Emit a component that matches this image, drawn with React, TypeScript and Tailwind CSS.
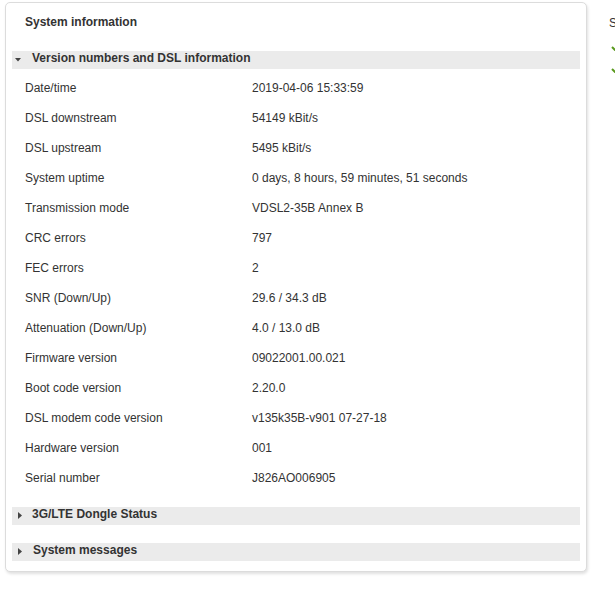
import React from "react";

const rows: [string, string][] = [
  ["Date/time", "2019-04-06 15:33:59"],
  ["DSL downstream", "54149 kBit/s"],
  ["DSL upstream", "5495 kBit/s"],
  ["System uptime", "0 days, 8 hours, 59 minutes, 51 seconds"],
  ["Transmission mode", "VDSL2-35B Annex B"],
  ["CRC errors", "797"],
  ["FEC errors", "2"],
  ["SNR (Down/Up)", "29.6 / 34.3 dB"],
  ["Attenuation (Down/Up)", "4.0 / 13.0 dB"],
  ["Firmware version", "09022001.00.021"],
  ["Boot code version", "2.20.0"],
  ["DSL modem code version", "v135k35B-v901 07-27-18"],
  ["Hardware version", "001"],
  ["Serial number", "J826AO006905"],
];

function DownTri() {
  return (
    <svg width="6" height="4" viewBox="0 0 6 4" className="ml-[3px] mr-[11px] mt-[3px]">
      <polygon points="0,0 6,0 3,3.5" fill="#444" />
    </svg>
  );
}

function RightTri() {
  return (
    <svg width="4" height="7" viewBox="0 0 4 7" className="ml-[6px] mr-[10px] mt-[2px]">
      <polygon points="0,0 4,3.5 0,7" fill="#444" />
    </svg>
  );
}

function Check() {
  return (
    <svg width="10" height="8" viewBox="0 0 10 8">
      <path d="M1 4 L4 7 L9 1" stroke="#5a9a1e" strokeWidth="2" fill="none" />
    </svg>
  );
}

export default function App() {
  return (
    <div className="flex w-[615px] h-[590px] overflow-hidden bg-white font-['Liberation_Sans',Arial,sans-serif] text-[12px] text-[#333]">
      <div className="pl-[5px] pt-[2px] shrink-0">
        <div className="w-[582px] border border-[#dcdcdc] rounded-[5px] shadow-[1px_2px_3px_rgba(0,0,0,0.12)] bg-white px-[6px] pb-[10px]">
          <div className="h-[48px] pl-[13px] pt-[12px] leading-[14px] font-bold text-[#333]">
            System information
          </div>
          <div className="h-[18px] bg-[#ebebeb] flex items-center pb-[4px] font-bold leading-[14px]">
            <DownTri />
            <span>Version numbers and DSL information</span>
          </div>
          <div className="pt-[4px]">
            {rows.map(([k, v]) => (
              <div key={k} className="h-[30px] flex items-center leading-[14px]">
                <div className="w-[240px] pl-[13px] shrink-0">{k}</div>
                <div>{v}</div>
              </div>
            ))}
          </div>
          <div className="mt-[14px] h-[18px] bg-[#ebebeb] flex items-center pb-[4px] font-bold leading-[14px]">
            <RightTri />
            <span>3G/LTE Dongle Status</span>
          </div>
          <div className="mt-[18px] h-[18px] bg-[#ebebeb] flex items-center pb-[4px] font-bold leading-[14px]">
            <RightTri />
            <span className="ml-[1px]">System messages</span>
          </div>
        </div>
      </div>
      <div className="pl-[22px] pt-[16px] shrink-0 w-[60px]">
        <div className="leading-[14px] text-[12px]">Status</div>
        <div className="mt-[13px] flex flex-col gap-[14px] pl-[2px]">
          <Check />
          <Check />
        </div>
      </div>
    </div>
  );
}
